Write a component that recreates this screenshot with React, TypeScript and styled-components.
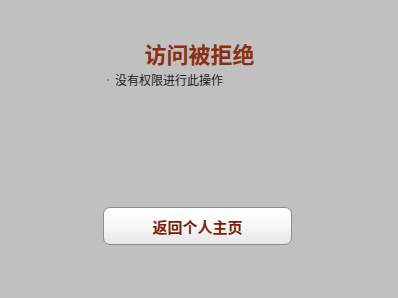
import React from "react";
import styled, { createGlobalStyle } from "styled-components";

const Global = createGlobalStyle`
  html, body { margin: 0; padding: 0; background: #c0c0c0; }
  body { font-family: "Noto Sans CJK SC", "Liberation Sans", sans-serif; }
`;

const Page = styled.div`
  width: 398px;
  height: 298px;
  box-sizing: border-box;
  padding-top: 38px;
  display: flex;
  flex-direction: column;
`;

const Title = styled.h1`
  margin: 0;
  text-align: center;
  font-size: 22px;
  line-height: 30px;
  font-weight: bold;
  color: #8b2f14;
  padding-left: 1px;
`;

const List = styled.ul`
  margin: 4px 0 0 0;
  padding: 0 0 0 107px;
  list-style: none;
`;

const Item = styled.li`
  display: flex;
  align-items: center;
  gap: 6px;
  font-size: 12px;
  line-height: 16px;
  color: #222;
  &::before {
    content: "";
    width: 2px;
    height: 2px;
    background: #8a8a8a;
  }
`;

const Actions = styled.div`
  margin-top: 119px;
  padding-left: 103px;
`;

const Button = styled.button`
  width: 189px;
  height: 38px;
  box-sizing: border-box;
  border: 1px solid #8c8c8c;
  border-radius: 7px;
  background: linear-gradient(to bottom, #ffffff 0%, #f7f7f7 50%, #e6e6e6 100%);
  font-family: "Noto Sans CJK SC", sans-serif;
  font-size: 15px;
  font-weight: bold;
  color: #7a1f0c;
  cursor: pointer;
  padding: 0;
`;

export default function App() {
  return (
    <Page>
      <Global />
      <Title>访问被拒绝</Title>
      <List>
        <Item>没有权限进行此操作</Item>
      </List>
      <Actions>
        <Button>返回个人主页</Button>
      </Actions>
    </Page>
  );
}
